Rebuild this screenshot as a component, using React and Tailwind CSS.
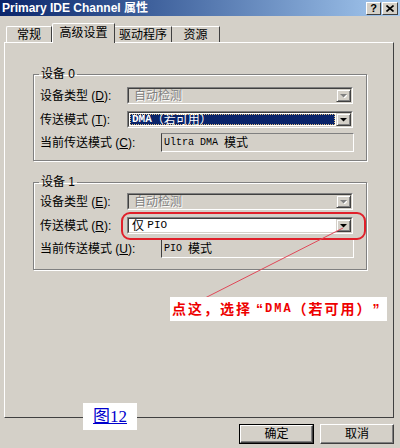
import React from "react";

function Arrow({ disabled }) {
  return (
    <svg width="7" height="4" viewBox="0 0 7 4" className="block">
      {disabled ? (
        <>
          <polygon points="1,1 8,1 4.5,4.5" fill="#ffffff" />
          <polygon points="0,0 7,0 3.5,3.5" fill="#808080" />
        </>
      ) : (
        <polygon points="0,0 7,0 3.5,3.5" fill="#000000" />
      )}
    </svg>
  );
}

function Combo({ disabled, selected, children }) {
  return (
    <div className="flex h-[17px] w-[226px] border border-t-[#808080] border-l-[#808080] border-b-white border-r-white">
      <div className="flex flex-1 border border-t-[#404040] border-l-[#404040] border-b-[#d4d0c8] border-r-[#d4d0c8]">
        <div
          className={
            disabled
              ? "flex flex-1 items-center bg-[#d4d0c8] pl-[3px] text-[12px] leading-none text-[#808080] [text-shadow:1px_1px_0_#ffffff]"
              : "flex flex-1 items-center bg-white p-[1px] text-[12px] leading-none text-black"
          }
        >
          {selected ? (
            <div className="flex h-full flex-1 items-center bg-[#0a246a] pl-[2px] text-white outline-1 outline-dotted outline-[#e0c080] -outline-offset-1">
              {children}
            </div>
          ) : (
            <div className="flex items-center pl-[2px]">{children}</div>
          )}
        </div>
        <div className="flex w-[15px] items-center justify-center border border-t-[#d4d0c8] border-l-[#d4d0c8] border-b-[#404040] border-r-[#404040] bg-[#d4d0c8] shadow-[inset_1px_1px_0_#ffffff,inset_-1px_-1px_0_#808080]">
          <Arrow disabled={disabled} />
        </div>
      </div>
    </div>
  );
}

function Static({ children }) {
  return (
    <div className="flex h-[19px] w-[193px] items-center border border-t-[#808080] border-l-[#404040] border-b-white border-r-white pl-[2px] text-[12px] leading-none text-black">
      {children}
    </div>
  );
}

function Label({ w, text, k }) {
  return (
    <div className={`${w} shrink-0 text-[12px] leading-none text-black`}>
      {text} (<span className="underline">{k}</span>):
    </div>
  );
}

const mono = "font-['Liberation_Mono','Noto_Sans_CJK_SC',monospace]";

function Group({ title, h, first, second, third, typeKey, modeKey, curKey, gaps }) {
  return (
    <fieldset
      className={`${h} ml-[28px] w-[334px] border border-[#808080] px-0 shadow-[1px_1px_0_#ffffff,inset_1px_1px_0_#ffffff]`}
    >
      <legend className="ml-[5px] px-[2px] text-[12px] leading-[14px] text-black">
        {title}
      </legend>
      <div className={`flex flex-col pl-[6px] ${gaps}`}>
        <div className="flex items-center">
          <Label w="w-[87px]" text="设备类型" k={typeKey} />
          <Combo disabled>{first}</Combo>
        </div>
        <div className="mt-[7px] flex items-center">
          <Label w="w-[87px]" text="传送模式" k={modeKey} />
          {second}
        </div>
        <div className="mt-[5px] flex items-center">
          <Label w="w-[121px]" text="当前传送模式" k={curKey} />
          <Static>{third}</Static>
        </div>
      </div>
    </fieldset>
  );
}

export default function App() {
  return (
    <div className="relative h-[448px] w-[400px] overflow-hidden bg-[#d4d0c8] font-['Liberation_Sans','Noto_Sans_CJK_SC',sans-serif]">
      {/* Title bar */}
      <div className="flex h-[16px] items-center justify-between bg-gradient-to-r from-[#0a246a] to-[#a6caf0] pl-[2px] pr-[2px]">
        <div className="text-[12px] font-bold leading-none text-white">
          Primary IDE Channel 属性
        </div>
        <div className="flex gap-[1px]">
          <div className="flex h-[13px] w-[15px] items-center justify-center border border-t-white border-l-white border-b-[#404040] border-r-[#404040] bg-[#d4d0c8] text-[11px] font-bold leading-none text-black">
            ?
          </div>
          <div className="flex h-[13px] w-[16px] items-center justify-center border border-t-white border-l-white border-b-[#404040] border-r-[#404040] bg-[#d4d0c8]">
            <svg width="8" height="7" viewBox="0 0 8 7">
              <path d="M0.5 0.5 L7.5 6.5 M7.5 0.5 L0.5 6.5" stroke="#000" strokeWidth="1.6" />
            </svg>
          </div>
        </div>
      </div>

      {/* Tabs */}
      <div className="flex h-[26px] items-end pl-[6px]">
        <div className="flex h-[16px] w-[46px] items-center justify-center rounded-tl-[2px] border-l border-t border-r border-l-white border-t-white border-r-[#404040] text-[12px] leading-none text-black">
          常规
        </div>
        <div className="relative z-10 -mb-[1px] flex h-[20px] w-[63px] items-start justify-center rounded-tl-[2px] border-l border-t border-r border-l-white border-t-white border-r-[#404040] bg-[#d4d0c8] pt-[3px] text-[12px] leading-none text-black">
          高级设置
        </div>
        <div className="flex h-[16px] w-[57px] items-center justify-center border-t border-r border-t-white border-r-[#404040] text-[12px] leading-none text-black">
          驱动程序
        </div>
        <div className="flex h-[16px] w-[48px] items-center justify-center border-t border-r border-t-white border-r-[#404040] text-[12px] leading-none text-black">
          资源
        </div>
      </div>

      {/* Panel */}
      <div className="ml-[4px] h-[376px] w-[390px] border border-l-white border-t-white border-r-[#404040] border-b-[#404040]">
        <div className="flex flex-col pt-[24px]">
          <Group
            title="设备 0"
            h="h-[94px]"
            typeKey="D"
            modeKey="T"
            curKey="C"
            gaps="mt-[6px]"
            first="自动检测"
            second={
              <Combo selected>
                <span className={`${mono} text-[11px] font-bold`}>DMA</span>
                <span>（若可用）</span>
              </Combo>
            }
            third={
              <>
                <span className={`${mono} text-[10px]`}>Ultra DMA&nbsp;</span>
                <span>模式</span>
              </>
            }
          />
          <div className="h-[14px]" />
          <Group
            title="设备 1"
            h="h-[95px]"
            typeKey="E"
            modeKey="R"
            curKey="U"
            gaps="mt-[4px]"
            first="自动检测"
            second={
              <Combo>
                <span>仅&nbsp;</span>
                <span className={`${mono} text-[11px]`}>PIO</span>
              </Combo>
            }
            third={
              <>
                <span className={`${mono} text-[10px]`}>PIO&nbsp;</span>
                <span>模式</span>
              </>
            }
          />
        </div>
      </div>

      {/* Buttons */}
      <div className="mt-[6px] flex justify-end gap-[6px] pr-[6px]">
        <div className="flex h-[20px] w-[75px] border border-black">
          <div className="flex flex-1 items-center justify-center border border-t-white border-l-white border-b-[#404040] border-r-[#404040] shadow-[inset_-1px_-1px_0_#808080] text-[12px] leading-none text-black">
            确定
          </div>
        </div>
        <div className="flex h-[20px] w-[74px] items-center justify-center border border-t-white border-l-white border-b-[#404040] border-r-[#404040] shadow-[inset_-1px_-1px_0_#808080] text-[12px] leading-none text-black">
          取消
        </div>
      </div>

      {/* Annotations */}
      <div className="pointer-events-none absolute left-[121px] top-[212px] h-[28px] w-[245px] rounded-[9px] border-2 border-[#e0202a]" />
      <svg className="pointer-events-none absolute left-0 top-0" width="400" height="448">
        <line x1="343" y1="228" x2="203" y2="299" stroke="#e04858" strokeWidth="1" />
      </svg>
      <div className="absolute left-[170px] top-[297px] flex h-[24px] w-[217px] items-center bg-white pl-[2px] text-[14px] font-bold leading-none tracking-[2px] text-[#ee0000]">
        点这，选择<span className="pl-[4px]">“</span>
        <span className={`${mono} text-[12px]`}>DMA</span>（若可用）<span>”</span>
      </div>
      <div className="absolute left-[83px] top-[403px] flex h-[27px] w-[54px] items-center justify-center bg-white">
        <span className="font-['Liberation_Serif','Noto_Sans_CJK_SC',serif] text-[17px] leading-none text-[#0000cc] underline">
          图12
        </span>
      </div>
    </div>
  );
}
